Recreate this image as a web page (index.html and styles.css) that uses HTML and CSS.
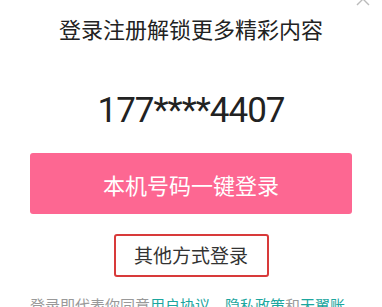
FILE: index.html
```html
<!DOCTYPE html>
<html lang="zh">
<head>
<meta charset="utf-8">
<link rel="stylesheet" href="styles.css">
</head>
<body>
<div class="sheet">
  <svg class="chevron" width="14" height="8" viewBox="0 0 14 8"><path d="M1 7 L7 1 L13 7" fill="none" stroke="#bbb" stroke-width="1.4"/></svg>
  <h1 class="title">登录注册解锁更多精彩内容</h1>
  <div class="phone">177****4407</div>
  <button class="primary">本机号码一键登录</button>
  <div class="other-wrap"><span class="other">其他方式登录</span></div>
  <p class="agree">登录即代表你同意<span class="link">用户协议</span>、<span class="link">隐私政策</span>和<span class="link">天翼账号服务条款</span></p>
</div>
</body>
</html>
```
FILE: styles.css
```css
html, body {
  margin: 0;
  padding: 0;
  background: #fff;
  overflow: hidden;
}
.sheet {
  position: relative;
  width: 382px;
  height: 307px;
  overflow: hidden;
  display: flex;
  flex-direction: column;
  align-items: center;
  font-family: "Noto Sans CJK SC", "Noto Sans", sans-serif;
}
.sheet > * {
  flex-shrink: 0;
}
.chevron {
  position: absolute;
  top: -2px;
  right: 12px;
}
.title {
  margin: 12px 0 0;
  font-size: 22px;
  font-weight: 400;
  line-height: 32px;
  color: #222;
}
.phone {
  margin-top: 45px;
  font-family: Roboto, "Noto Sans", sans-serif;
  font-size: 35px;
  letter-spacing: -1px;
  line-height: 44px;
  color: #222;
}
.primary {
  margin-top: 20px;
  width: 322px;
  height: 61px;
  border: none;
  border-radius: 3px;
  background: #fd6792;
  color: #fff;
  font-family: "Noto Sans CJK SC", sans-serif;
  font-size: 22px;
  padding: 0;
}
.other-wrap {
  margin-top: 20px;
}
.other {
  display: block;
  box-sizing: border-box;
  width: 155px;
  height: 43px;
  border: 2px solid #d83a3a;
  border-radius: 3px;
  text-align: center;
  font-size: 19px;
  line-height: 37px;
  color: #333;
}
.agree {
  margin: 17px 0 0;
  width: 322px;
  font-size: 15px;
  line-height: 22px;
  color: #999;
}
.link {
  color: #1ca69e;
}
```
